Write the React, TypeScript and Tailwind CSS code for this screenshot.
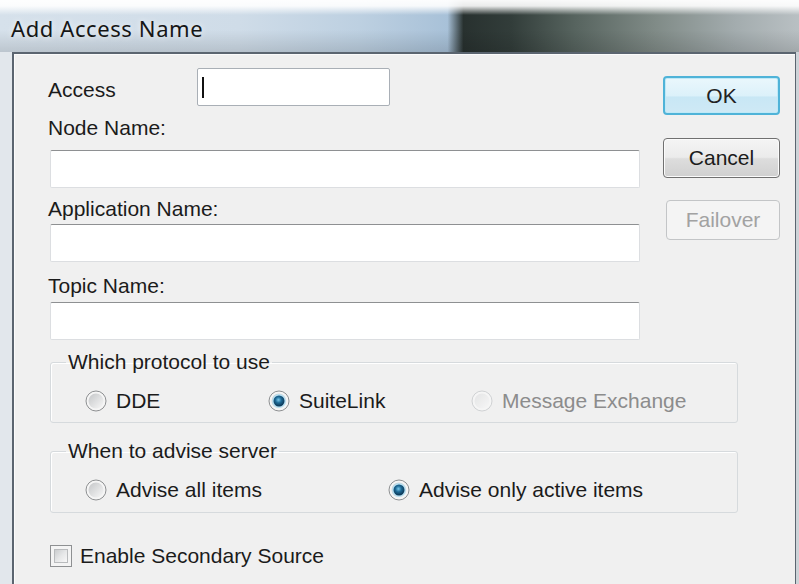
import React from 'react';

type RadioState = 'off' | 'on' | 'disabled';

// Vista-style round option button
const RadioMark: React.FC<{ state: RadioState; id: string }> = ({ state, id }) => (
  <svg width="22" height="22" viewBox="0 0 22 22" className="shrink-0">
    <defs>
      <linearGradient id={`${id}-well`} x1="0" y1="0" x2="1" y2="1">
        <stop offset="0" stopColor="#c4c6c8" />
        <stop offset="1" stopColor="#f8f8f8" />
      </linearGradient>
      <radialGradient id={`${id}-dot`} cx="45%" cy="40%" r="60%">
        <stop offset="0" stopColor="#79c9ec" />
        <stop offset="0.45" stopColor="#1d6a96" />
        <stop offset="1" stopColor="#0a3250" />
      </radialGradient>
    </defs>
    <circle cx="11" cy="11" r="10" fill="#f5f5f5" stroke={state === 'disabled' ? '#d0d2d4' : '#8e9092'} />
    <circle cx="11" cy="11" r="7.5" fill={`url(#${id}-well)`} opacity={state === 'disabled' ? 0.35 : 1} />
    {state === 'on' && (
      <>
        <circle cx="11" cy="11" r="7" fill="#b7e0f2" />
        <circle cx="11" cy="11" r="5.5" fill={`url(#${id}-dot)`} />
      </>
    )}
  </svg>
);

const Option: React.FC<{ label: string; state: RadioState; id: string; className?: string }> = ({ label, state, id, className }) => (
  <div className={`flex items-center gap-[9px] h-[24px] ${className ?? ''}`}>
    <RadioMark state={state} id={id} />
    <span className={state === 'disabled' ? 'text-[#8c8c8c]' : ''}>{label}</span>
  </div>
);

const TextBox: React.FC<{ className?: string }> = ({ className }) => (
  <div className={`h-[38px] w-[590px] ml-[2px] bg-white border border-[#dcdee1] border-t-[#8e9092] rounded-[2px] ${className ?? ''}`} />
);

const GroupBox: React.FC<{ title: string; className?: string; children: React.ReactNode }> = ({ title, className, children }) => (
  <fieldset className={`ml-[2px] w-[688px] border border-[#d6dadd] rounded-[3px] p-0 shadow-[inset_1px_1px_0_#ffffff] ${className ?? ''}`}>
    <legend className="ml-[15px] px-[2px] h-[24px]">{title}</legend>
    <div className="flex items-center pl-[34px]">{children}</div>
  </fieldset>
);

export default function App() {
  return (
    <div className="w-[799px] h-[584px] overflow-hidden flex flex-col bg-[#e4e8ec] font-['Liberation_Sans',Arial,sans-serif] text-[21px] leading-[24px] text-[#1b1b1b]">
      {/* caption */}
      <div className="h-[52px] shrink-0 flex items-center pl-[11px] pt-[4px] bg-[linear-gradient(180deg,rgba(255,255,255,0.97)_0px,rgba(255,255,255,0.9)_6px,rgba(255,255,255,0)_15px,rgba(255,255,255,0)_30px,rgba(0,0,0,0.12)_100%),linear-gradient(90deg,#d6e1eb_0%,#cfdce8_30%,#bdd0e1_45%,#a8c1d8_56%,#28312f_58%,#323d3a_64%,#57645f_72%,#808b87_82%,#a3acae_92%,#b9c0c3_100%)]">
        <span className="font-['Noto_Sans',sans-serif] text-[22px] tracking-[0.6px] text-[#161616] [text-shadow:0_0_6px_rgba(255,255,255,0.8)]">Add Access Name</span>
      </div>

      <div className="flex-1 flex min-h-0">
        <div className="w-[12px] shrink-0 bg-[#e2e7ec]" />

        <div className="flex-1 flex flex-col bg-[#f0f0f0] border-l-2 border-t-2 border-r border-[#5b6570] pl-[34px] pt-[14px] shadow-[inset_1px_1px_0_#fbfbfb]">
          {/* fields + command buttons */}
          <div className="flex">
            <div className="w-[592px] flex flex-col">
              <div className="flex items-start h-[38px]">
                <span className="mt-[10px] w-[149px]">Access</span>
                <div className="w-[193px] h-[38px] bg-white border border-[#a9afb6] rounded-[2px] flex items-center pl-[4px]">
                  <div className="w-[2px] h-[21px] bg-[#111]" />
                </div>
              </div>
              <div className="mt-[10px]">Node Name:</div>
              <TextBox className="mt-[10px]" />
              <div className="mt-[9px]">Application Name:</div>
              <TextBox className="mt-[3px]" />
              <div className="mt-[12px]">Topic Name:</div>
              <TextBox className="mt-[4px]" />
            </div>

            <div className="ml-[23px] w-[117px] flex flex-col">
              <button className="mt-[8px] h-[39px] rounded-[4px] border-2 border-[#4fb3d8] bg-[linear-gradient(180deg,#eaf7fc_0%,#dcf1fa_50%,#c8e7f5_55%,#cfe9f5_100%)] shadow-[inset_0_0_0_1px_#bfe9f7] text-[#222]">
                OK
              </button>
              <button className="mt-[23px] h-[40px] rounded-[4px] border border-[#707070] bg-[linear-gradient(180deg,#f4f4f4_0%,#ebebeb_48%,#dddddd_52%,#d0d0d0_100%)] shadow-[inset_0_0_0_1px_#fbfbfb]">
                Cancel
              </button>
              <button disabled className="mt-[22px] ml-[3px] h-[40px] rounded-[4px] border border-[#c3c5c7] bg-[#f4f4f4] text-[#a2a2a2]">
                Failover
              </button>
            </div>
          </div>

          <GroupBox title="Which protocol to use" className="mt-[10px] pt-[15px] pb-[9px]">
            <Option label="DDE" state="off" id="dde" className="w-[183px]" />
            <Option label="SuiteLink" state="on" id="suitelink" className="w-[203px]" />
            <Option label="Message Exchange" state="disabled" id="mx" />
          </GroupBox>

          <GroupBox title="When to advise server" className="mt-[16px] pt-[15px] pb-[10px]">
            <Option label="Advise all items" state="off" id="all" className="w-[303px]" />
            <Option label="Advise only active items" state="on" id="active" />
          </GroupBox>

          <label className="mt-[31px] ml-[2px] flex items-center gap-[8px] h-[24px]">
            <span className="w-[22px] h-[22px] border border-[#8e9092] bg-[#f4f4f4] p-[3px] shrink-0">
              <span className="block w-full h-full border border-[#b9bbbd] bg-[linear-gradient(135deg,#cbcdcf_0%,#e6e7e8_50%,#f8f8f8_100%)]" />
            </span>
            <span>Enable Secondary Source</span>
          </label>
        </div>

        <div className="w-[3px] shrink-0 bg-[#cdd3d8]" />
      </div>
    </div>
  );
}
